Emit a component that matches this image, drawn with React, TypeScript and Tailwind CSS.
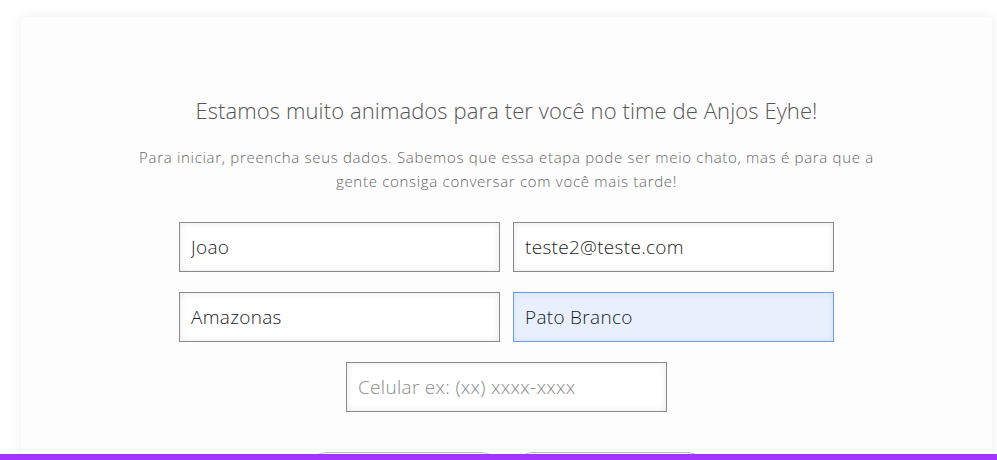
import { useState } from 'react'

// cadastro - etapa de dados basicos
export default function App() {
  const [nome, setNome] = useState('Joao')
  const [email, setEmail] = useState('teste2@teste.com')
  const [estado, setEstado] = useState('Amazonas')
  const [cidade, setCidade] = useState('Pato Branco')
  const [celular, setCelular] = useState('')

  const inputClass =
    'w-[321px] h-[50px] border border-[#898989] bg-white px-[11px] text-[19px] tracking-[0.3px] font-light text-[#222] placeholder-[#8a8a8a] shadow-[inset_0_0_7px_rgba(0,0,0,0.09)] outline-none'

  return (
    <div className="min-h-screen bg-white pt-[17px] font-['Open_Sans',sans-serif]">
      <div className="ml-[21px] mr-[5px] bg-[#fdfdfd] shadow-[0_0_12px_rgba(0,0,0,0.07)] pt-[78px] pb-[40px] flex flex-col items-center">
        <h1 className="text-[22px] leading-[30px] tracking-[0.1px] font-light text-[#555]">
          Estamos muito animados para ter você no time de Anjos Eyhe!
        </h1>

        <p className="mt-[20px] max-w-[750px] text-center text-[15px] leading-[24px] tracking-[0.7px] font-light text-[#666]">
          Para iniciar, preencha seus dados. Sabemos que essa etapa pode ser meio chato, mas é para que a gente consiga conversar com você mais tarde!
        </p>

        <div className="mt-[29px] grid grid-cols-2 gap-x-[13px] gap-y-[20px]">
          <input
            value={nome}
            onChange={function (e) { setNome(e.target.value) }}
            className={inputClass}
          />
          <input
            value={email}
            onChange={function (e) { setEmail(e.target.value) }}
            className={inputClass}
          />
          <input
            value={estado}
            onChange={function (e) { setEstado(e.target.value) }}
            className={inputClass}
          />
          {/* campo com autofill do navegador */}
          <input
            value={cidade}
            onChange={function (e) { setCidade(e.target.value) }}
            className="w-[321px] h-[50px] border border-[#6d9ae6] bg-[#e8f0fe] px-[11px] text-[19px] tracking-[0.3px] font-light text-[#222] shadow-[inset_0_0_7px_rgba(0,0,0,0.07)] outline-none"
          />
        </div>

        <input
          value={celular}
          placeholder="Celular ex: (xx) xxxx-xxxx"
          onChange={function (e) { setCelular(e.target.value) }}
          className={inputClass + ' mt-[20px]'}
        />

        <div className="mt-[40px] flex gap-[12px]">
          <button className="w-[194px] h-[40px] rounded-full border border-[#bcbcbc] bg-white text-[15px] text-[#555]">
            Voltar
          </button>
          <button className="w-[194px] h-[40px] rounded-full border border-[#bcbcbc] bg-white text-[15px] text-[#555]">
            Continuar
          </button>
        </div>
      </div>

      <div className="fixed bottom-0 left-0 right-0 h-[6px] bg-[#a036fd]" />
    </div>
  )
}
